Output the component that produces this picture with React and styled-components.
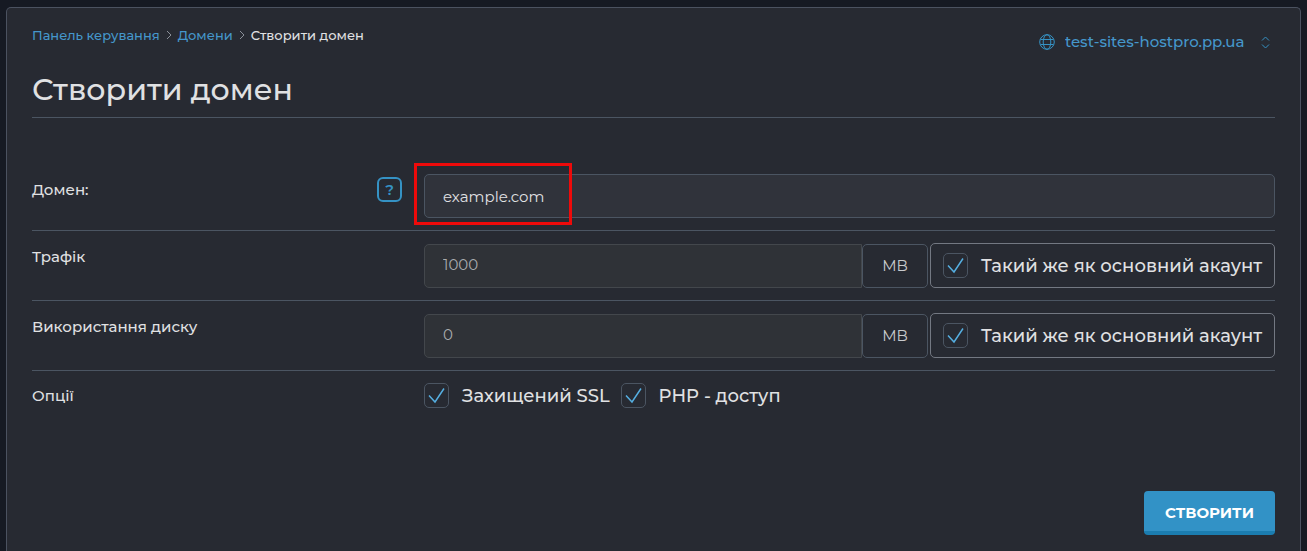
import React, { useState } from 'react';
import styled, { createGlobalStyle } from 'styled-components';

const ACCOUNT_LIMIT_LABEL = 'Такий же як основний акаунт';

const Globe = () => (
  <GlobeIcon viewBox="0 0 16 16" aria-hidden="true">
    <circle cx="8" cy="8" r="7.3" />
    <ellipse cx="8" cy="8" rx="3.8" ry="7.3" />
    <path d="M1.500 5.500h13M1.500 10.500h13" />
  </GlobeIcon>
);

const Check = ({ label, defaultChecked = true }) => {
  const [checked, setChecked] = useState(defaultChecked);
  return (
    <CheckLabel>
      <CheckBox>
        <CheckInput type="checkbox" checked={checked} onChange={e => setChecked(e.target.checked)} />
        <CheckMark viewBox="0 0 25 25" aria-hidden="true">
          <path d="M5 12.500l6 6.500L20 5.500" />
        </CheckMark>
      </CheckBox>
      {label}
    </CheckLabel>
  );
};

const LimitRow = ({ id, label, value }) => (
  <Row>
    <LabelCell>
      <label htmlFor={id}>{label}</label>
    </LabelCell>
    <LimitFields>
      <TextInput id={id} type="text" defaultValue={value} $muted />
      <Unit>MB</Unit>
      <SameAsMain>
        <Check label={ACCOUNT_LIMIT_LABEL} />
      </SameAsMain>
    </LimitFields>
  </Row>
);

export default () => (
  <React.Fragment>
    <GlobalStyle />
    <Panel>
      <TopBar>
        <Breadcrumbs aria-label="breadcrumb">
          <a href="#dashboard">Панель керування</a>
          <Separator viewBox="0 0 6 10" aria-hidden="true"><path d="M1 1l4 4-4 4" /></Separator>
          <a href="#domains">Домени</a>
          <Separator viewBox="0 0 6 10" aria-hidden="true"><path d="M1 1l4 4-4 4" /></Separator>
          <span>Створити домен</span>
        </Breadcrumbs>
        <DomainPicker>
          <Globe />
          <DomainSelect aria-label="Домен">
            <option>test-sites-hostpro.pp.ua</option>
          </DomainSelect>
          <Arrows viewBox="0 0 9 13" aria-hidden="true">
            <path d="M1 4.500L4.500 1 8 4.500M1 8.500L4.500 12 8 8.500" />
          </Arrows>
        </DomainPicker>
      </TopBar>
      <Heading>Створити домен</Heading>
      <form onSubmit={e => e.preventDefault()}>
        <Row>
          <LabelCell $offset={3}>
            <label htmlFor="domain">Домен:</label>
            <HelpButton type="button" aria-label="Довідка">?</HelpButton>
          </LabelCell>
          <DomainField>
            <TextInput id="domain" type="text" defaultValue="example.com" />
            <Highlight />
          </DomainField>
        </Row>
        <LimitRow id="traffic" label="Трафік" value="1000" />
        <LimitRow id="disk" label="Використання диску" value="0" />
        <Row $last>
          <LabelCell $offset={0}>Опції</LabelCell>
          <Options>
            <Check label="Захищений SSL" />
            <Check label="PHP - доступ" />
          </Options>
        </Row>
        <Actions>
          <SubmitButton type="submit">СТВОРИТИ</SubmitButton>
        </Actions>
      </form>
    </Panel>
  </React.Fragment>
);

const GlobalStyle = createGlobalStyle`
  * {
    box-sizing: border-box;
  }

  body {
    margin: 0;
    background: #161a23;
    color: #e0e1e3;
    font-family: Montserrat, Inter, "Liberation Sans", sans-serif;
    font-size: 15px;
    font-weight: 500;
  }

  button, input, select {
    font: inherit;
  }
`

const Panel = styled.main`
  margin: 7px 6px 0;
  padding: 16px 25px;
  background: #272a32;
  border: 1px solid #4b5260;
  border-bottom: none;
  border-radius: 5px 5px 0 0;
`

const TopBar = styled.header`
  display: flex;
  align-items: flex-start;
  justify-content: space-between;
  height: 40px;
`

const Breadcrumbs = styled.nav`
  display: flex;
  align-items: center;
  gap: 6px;
  font-size: 13px;
  line-height: 22px;

  a {
    color: #4597cb;
    text-decoration: none;
  }
`

const Separator = styled.svg`
  width: 6px;
  height: 10px;
  fill: none;
  stroke: #8b9099;
`

const DomainPicker = styled.div`
  display: flex;
  align-items: center;
  padding: 8px 5px 0 0;
  color: #4597cb;
`

const GlobeIcon = styled.svg`
  width: 16px;
  height: 16px;
  margin-right: 10px;
  fill: none;
  stroke: #3592c4;
`

const DomainSelect = styled.select`
  appearance: none;
  padding: 0;
  border: none;
  background: none;
  color: inherit;
  line-height: 20px;
`

const Arrows = styled.svg`
  width: 9px;
  height: 13px;
  margin-left: 16px;
  fill: none;
  stroke: #3592c4;
`

const Heading = styled.h1`
  margin: 0 0 44px;
  padding: 6px 0 7px;
  border-bottom: 1px solid #4b5562;
  font-size: 30px;
  font-weight: 500;
  line-height: 40px;
`

const Row = styled.div`
  display: grid;
  grid-template-columns: 392px 1fr;
  padding: 12px 0;
  border-bottom: ${({ $last }) => ($last ? 'none' : '1px solid #4b5562')};
`

const LabelCell = styled.div`
  display: flex;
  align-items: flex-start;
  justify-content: space-between;
  padding: ${({ $offset = 1 }) => $offset}px 22px 0 0;
  line-height: 26px;
`

const HelpButton = styled.button`
  width: 25px;
  height: 25px;
  padding: 0;
  border: 2px solid #3592c4;
  border-radius: 6px;
  background: none;
  color: #3592c4;
  font-weight: 600;
  line-height: 20px;
`

const TextInput = styled.input`
  width: 100%;
  height: 44px;
  padding: ${({ $muted }) => ($muted ? '0 18px 2px' : '0 18px')};
  border: 1px solid ${({ $muted }) => ($muted ? '#43474c' : '#4b5562')};
  border-radius: ${({ $muted }) => ($muted ? '5px 0 0 5px' : '5px')};
  background: ${({ $muted }) => ($muted ? '#2f3237' : '#30333b')};
  color: ${({ $muted }) => ($muted ? '#a9abae' : '#e0e1e3')};
  font-weight: 400;
`

const DomainField = styled.div`
  position: relative;
`

const Highlight = styled.div`
  position: absolute;
  top: -11px;
  left: -10px;
  width: 158px;
  height: 62px;
  border: 3px solid #ee0a0a;
  pointer-events: none;
`

const LimitFields = styled.div`
  display: grid;
  grid-template-columns: 1fr 66px 347px;
  align-items: center;
`

const Unit = styled.span`
  height: 44px;
  border: 1px solid #4b5562;
  border-radius: 5px;
  color: #c9cbce;
  font-weight: 400;
  line-height: 42px;
  text-align: center;
`

const SameAsMain = styled.div`
  height: 45px;
  margin-left: 2px;
  padding: 9px 0 0 12px;
  border: 1px solid #737882;
  border-radius: 5px;
`

const CheckLabel = styled.label`
  display: flex;
  align-items: flex-start;
  gap: 13px;
  font-size: 18px;
  line-height: 27px;
  white-space: nowrap;
`

const CheckBox = styled.span`
  display: grid;
  flex: none;
`

const CheckInput = styled.input`
  grid-area: 1 / 1;
  appearance: none;
  width: 25px;
  height: 25px;
  margin: 0;
  border: 1px solid #4b5562;
  border-radius: 5px;
`

const CheckMark = styled.svg`
  grid-area: 1 / 1;
  width: 25px;
  height: 25px;
  fill: none;
  stroke: #55aee0;
  stroke-width: 1.500;
  pointer-events: none;

  ${CheckInput}:not(:checked) + & {
    visibility: hidden;
  }
`

const Options = styled.div`
  display: flex;
  align-items: flex-start;
  gap: 11px;
`

const Actions = styled.div`
  display: flex;
  justify-content: flex-end;
  padding-top: 69px;
`

const SubmitButton = styled.button`
  width: 131px;
  height: 44px;
  padding: 2px 0 0;
  border: none;
  border-bottom: 4px solid #1b7db0;
  border-radius: 4px;
  background: #3292c6;
  color: #ffffff;
  font-weight: 700;
`
